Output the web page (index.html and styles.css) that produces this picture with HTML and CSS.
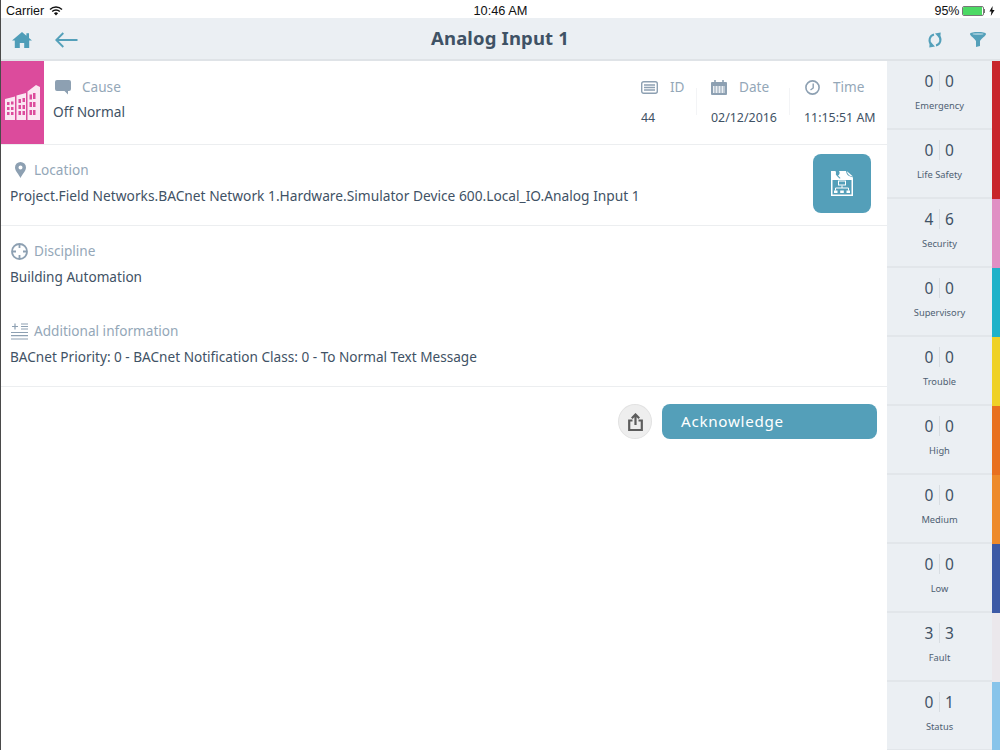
FILE: index.html
```html
<!DOCTYPE html>
<html lang="en">
<head>
<meta charset="utf-8">
<title>Analog Input 1</title>
<link rel="stylesheet" href="styles.css">
</head>
<body>
<div class="app">
  <div class="status">
    <div class="status-left">Carrier
      <svg class="wifi" width="14" height="10" viewBox="0 0 14 10"><path d="M7 9.600 4.900 7.200a3 3 0 0 1 4.200 0z" fill="#111"/><path d="M3.200 5.600a5.400 5.400 0 0 1 7.600 0M1 3.400a8.600 8.600 0 0 1 12 0" fill="none" stroke="#111" stroke-width="1.400"/></svg>
    </div>
    <div class="status-mid">10:46 AM</div>
    <div class="status-right">95%
      <span class="battery"><span class="battery-fill"></span></span><span class="battery-tip"></span>
      <svg width="6" height="10" viewBox="0 0 6 10"><path d="M3.600 0 .4 5.600h2L1.800 10 5.600 4H3.400z" fill="#111"/></svg>
    </div>
  </div>
  <header class="nav">
    <div class="nav-left">
      <svg width="20" height="16" viewBox="0 0 20 16"><path d="M10 0 0 8.500h2.800V16h5v-5h4.400v5h5V8.500H20l-3-2.600V1.200h-2.600V3.700z" fill="#4f9db8"/></svg>
      <svg width="23" height="16" viewBox="0 0 23 16"><path d="M22.500 8H1.500M8.300 1 1.300 8l7 7" fill="none" stroke="#54a0ba" stroke-width="1.900"/></svg>
    </div>
    <h1 class="nav-title">Analog Input 1</h1>
    <div class="nav-right">
      <svg width="16" height="16" viewBox="0 0 16 16"><path d="M7 2.500A5.800 5.800 0 0 0 4.500 12.500M9 13.500A5.800 5.800 0 0 0 11.500 3.500" fill="none" stroke="#54a0ba" stroke-width="2"/><path d="M2.800 9 8 14.500 2.300 15.500zM13.200 7 8 1.500 13.700.5z" fill="#54a0ba"/></svg>
      <svg width="16" height="15" viewBox="0 0 16 15"><path d="M0 2C0-.6 16-.6 16 2c0 1.600-5 5-6 7v5l-4 1V9C5 7 0 3.600 0 2z" fill="#54a0ba"/><ellipse cx="8" cy="2" rx="5.500" ry="1" fill="#9cc8d8"/></svg>
    </div>
  </header>
  <div class="body">
    <main class="content">
      <section class="top">
        <div class="pink">
          <svg width="35" height="35" viewBox="0 0 35 35"><path d="M0 14 10 11.500V35H0zM11.500 10.500 21 8V35H11.500zM22.500 6.500 31 0l4 2V35H22.500z" fill="#fbe6f2"/><path d="M2 17h2.500v3H2zM6 16.500h2.500v3H6zM2 22h2.500v3H2zM6 22h2.500v3H6zM2 27h2.500v3H2zM6 27h2.500v3H6zM13.500 14h2.500v4h-2.500zM17.500 13h2.500v4h-2.500zM13.500 20h2.500v4h-2.500zM17.500 20h2.500v4h-2.500zM13.500 26h2.500v4h-2.500zM17.500 26h2.500v4h-2.500zM24.500 9.500h2.500v5h-2.500zM28 8h2.500v6H28zM24.500 17h2.500v5h-2.500zM28 17h2.500v5H28zM24.500 25h2.500v5h-2.500zM28 25h2.500v5H28z" fill="#dc4b9c"/></svg>
        </div>
        <div class="cause">
          <div class="label label-cause">
            <svg width="16" height="15" viewBox="0 0 16 15"><path d="M2 0h12a2 2 0 0 1 2 2v7a2 2 0 0 1-2 2h-1v3.500L9.500 11H2a2 2 0 0 1-2-2V2a2 2 0 0 1 2-2z" fill="#8da0b2"/></svg>
            <span>Cause</span>
          </div>
          <div class="value">Off Normal</div>
        </div>
        <div class="meta meta-id">
          <div class="label">
            <svg width="17" height="13" viewBox="0 0 17 13"><rect x=".7" y=".7" width="15.600" height="11.600" rx="2" fill="none" stroke="#8da0b2" stroke-width="1.400"/><path d="M3 4h11M3 6.500h11M3 9h11" stroke="#8da0b2" stroke-width="1.400"/></svg>
            <span>ID</span>
          </div>
          <div class="meta-value">44</div>
        </div>
        <div class="meta meta-date has-rule">
          <div class="label">
            <svg width="16" height="15" viewBox="0 0 16 15"><path d="M1 2h14a1 1 0 0 1 1 1v11a1 1 0 0 1-1 1H1a1 1 0 0 1-1-1V3a1 1 0 0 1 1-1z" fill="#8da0b2"/><path d="M4 0v3M12 0v3" stroke="#8da0b2" stroke-width="1.600"/><path d="M2 6h12v7H2z" fill="#ebeff3"/><path d="M4 6v7M7 6v7M10 6v7M13 6v7" stroke="#8da0b2"/></svg>
            <span>Date</span>
          </div>
          <div class="meta-value">02/12/2016</div>
        </div>
        <div class="meta meta-time has-rule">
          <div class="label">
            <svg width="15" height="15" viewBox="0 0 15 15"><circle cx="7.500" cy="7.500" r="6.600" fill="none" stroke="#8da0b2" stroke-width="1.600"/><path d="M8.200 3.500v4.500L5.500 10" fill="none" stroke="#8da0b2" stroke-width="1.400"/></svg>
            <span>Time</span>
          </div>
          <div class="meta-value">11:15:51 AM</div>
        </div>
      </section>
      <section class="location">
        <div class="grow">
          <div class="label label-loc">
            <svg width="11" height="16" viewBox="0 0 11 16"><path d="M5.500 0A5.500 5.500 0 0 1 11 5.500C11 9 7 12.500 5.500 16 4 12.500 0 9 0 5.500A5.500 5.500 0 0 1 5.500 0zm0 3.500a2 2 0 1 0 0 4 2 2 0 0 0 0-4z" fill="#8da0b2" fill-rule="evenodd"/></svg>
            <span>Location</span>
          </div>
          <div class="value">Project.Field Networks.BACnet Network 1.Hardware.Simulator Device 600.Local_IO.Analog Input 1</div>
        </div>
        <div class="tile">
          <svg width="22" height="25" viewBox="0 0 22 25"><path d="M0 0h4.500L5 1.500a3 3 0 0 0 1 3.500l2.500 2.500H9l.5-.5L7 4.500A3 3 0 0 0 8 0h7l.5 2c.5 2 2 3 4 3.500L21 6l1 .5V25H0zM1.500 9v14.500h19V9zM16 .3 22 5.500c-3 0-5.500-2-6-5.200z" fill="#fff" fill-rule="evenodd"/><path d="M7 9.500h8v5H7z" fill="#fff"/><path d="M8 10.500h6v3H8z" fill="#549fb9"/><path d="M11 14.500v2.500M4.500 19.500V17h13v2.500" fill="none" stroke="#fff"/><path d="M3 19.500h3.500v2.500H3zM9.200 19.500h3.600v2.500H9.200zM15.500 19.500H19v2.500h-3.500z" fill="#fff"/></svg>
        </div>
      </section>
      <section class="details">
        <div class="block">
          <div class="label label-disc">
            <svg width="17" height="17" viewBox="0 0 17 17"><circle cx="8.500" cy="8.500" r="7.500" fill="none" stroke="#8da0b2" stroke-width="1.800"/><path d="M8.500 1v4M8.500 12v4M1 8.500h4M12 8.500h4" stroke="#8da0b2" stroke-width="1.800"/></svg>
            <span>Discipline</span>
          </div>
          <div class="value">Building Automation</div>
        </div>
        <div class="block">
          <div class="label label-disc">
            <svg width="17" height="17" viewBox="0 0 17 17"><path d="M1 3.500h6M4 .5v6M10 1h7M10 3.500h7M10 6h7M0 9.500h17M0 12.700h17M0 16h17" fill="none" stroke="#8da0b2" stroke-width="1.200"/></svg>
            <span>Additional information</span>
          </div>
          <div class="value">BACnet Priority: 0 - BACnet Notification Class: 0 - To Normal Text Message</div>
        </div>
      </section>
      <section class="actions">
        <button class="share" type="button" aria-label="Share">
          <svg width="15" height="18" viewBox="0 0 15 18"><path d="M7.500 12V2M3.800 5.200 7.500 1.500l3.700 3.700M4.500 7.500H1.200V17h12.600V7.500h-3.300" fill="none" stroke="#5c5c5c" stroke-width="2.200"/></svg>
        </button>
        <button class="ack" type="button">Acknowledge</button>
      </section>
    </main>
    <aside class="side">
      <div class="cat"><div class="counts"><span>0</span><span>0</span></div><div class="name">Emergency</div><i class="bar c-red"></i></div>
      <div class="cat"><div class="counts"><span>0</span><span>0</span></div><div class="name">Life Safety</div><i class="bar c-red"></i></div>
      <div class="cat"><div class="counts"><span>4</span><span>6</span></div><div class="name">Security</div><i class="bar c-pink"></i></div>
      <div class="cat"><div class="counts"><span>0</span><span>0</span></div><div class="name">Supervisory</div><i class="bar c-cyan"></i></div>
      <div class="cat"><div class="counts"><span>0</span><span>0</span></div><div class="name">Trouble</div><i class="bar c-yellow"></i></div>
      <div class="cat"><div class="counts"><span>0</span><span>0</span></div><div class="name">High</div><i class="bar c-orange"></i></div>
      <div class="cat"><div class="counts"><span>0</span><span>0</span></div><div class="name">Medium</div><i class="bar c-amber"></i></div>
      <div class="cat"><div class="counts"><span>0</span><span>0</span></div><div class="name">Low</div><i class="bar c-blue"></i></div>
      <div class="cat"><div class="counts"><span>3</span><span>3</span></div><div class="name">Fault</div><i class="bar c-none"></i></div>
      <div class="cat"><div class="counts"><span>0</span><span>1</span></div><div class="name">Status</div><i class="bar c-sky"></i></div>
    </aside>
  </div>
</div>
</body>
</html>
```
FILE: styles.css
```css
* { box-sizing: border-box; }
html, body { margin: 0; height: 100%; }
body { font-family: "Noto Sans", "Open Sans", sans-serif; color: #3f5265; background: #fff; overflow: hidden; }
.app { width: 1000px; height: 750px; display: flex; flex-direction: column; border-left: 1px solid #4a4a4a; }
.status { height: 18px; flex: none; display: grid; grid-template-columns: 1fr auto 1fr; align-items: center; padding: 3px 5px 0 5px; font-family: "Liberation Sans", sans-serif; font-size: 12.500px; color: #111; background: #fff; }
.status-left { display: flex; align-items: center; gap: 5px; }
.status-mid { font-size: 12.800px; }
.status-right { display: flex; align-items: center; justify-content: flex-end; }
.battery { width: 22px; height: 10px; margin-left: 2px; border: 1px solid #777; border-radius: 2px; display: block; overflow: hidden; }
.battery-fill { display: block; height: 100%; width: 95%; background: #4cd964; }
.battery-tip { width: 1.500px; height: 4px; background: #777; margin-right: 4px; }
.nav { height: 43px; flex: none; display: flex; align-items: center; justify-content: space-between; padding: 2px 14px 0 11px; background: #ebeff3; border-bottom: 2px solid #dfe3e7; position: relative; }
.nav-left { display: flex; align-items: center; gap: 23px; }
.nav-right { display: flex; align-items: center; gap: 27px; }
.nav-title { position: absolute; left: 0; right: 0; top: 7px; margin: 0; padding-right: 1px; text-align: center; font-size: 18.500px; line-height: 26px; font-weight: 700; color: #3f5265; letter-spacing: .15px; }
.body { flex: 1; display: flex; min-height: 0; }
.content { width: 886px; flex: none; display: flex; flex-direction: column; }
.label { display: flex; align-items: center; font-size: 13.600px; line-height: 18px; color: #94a7b8; }
.value { font-size: 13.700px; line-height: 20px; color: #3f5265; }
.top { height: 84px; display: flex; border-bottom: 1px solid #eceef0; }
.pink { width: 43px; flex: none; background: #dc4b9c; display: flex; align-items: center; justify-content: center; }
.cause { flex: 1; padding: 17px 0 0 9px; }
.label-cause { gap: 11px; height: 18px; margin-bottom: 6px; }
.label-cause svg { margin-left: 2px; }
.meta { flex: none; position: relative; padding-top: 17px; }
.meta .label { gap: 12px; height: 18px; margin-bottom: 13px; }
.meta-time .label { gap: 13px; padding-left: 1px; }
.has-rule::before { content: ""; position: absolute; left: -15px; top: 27px; height: 27px; width: 1px; background: #f3f4f6; }
.meta-value { font-size: 12.400px; line-height: 18px; }
.meta-id { width: 70px; }
.meta-date { width: 93px; }
.meta-time { width: 83px; }
.location { height: 81px; display: flex; padding: 9px 16px 0 9px; border-bottom: 1px solid #eceef0; }
.location .value { font-size: 13.750px; }
.grow { flex: 1; padding-top: 7px; }
.label-loc { gap: 8px; margin-bottom: 7px; margin-left: 5px; }
.tile { width: 58px; height: 59px; border-radius: 8px; background: #549fb9; display: flex; align-items: center; justify-content: center; }
.details { height: 161px; padding: 16px 9px 0; border-bottom: 1px solid #eceef0; display: flex; flex-direction: column; gap: 25px; }
.details .value { font-size: 13.600px; }
.block { height: 55px; }
.label-disc { gap: 6px; margin-bottom: 7px; margin-left: 1px; }
.actions { display: flex; justify-content: flex-end; align-items: center; gap: 10px; padding: 17px 10px 0 0; }
.share { width: 34px; height: 35px; padding: 0; border-radius: 50%; border: 1px solid #e2e2e2; background: #eeeeee; display: flex; align-items: center; justify-content: center; }
.ack { width: 215px; height: 35px; padding: 0 0 0 19px; border: 0; border-radius: 8px; background: #549fb9; color: #fff; font: 400 15.200px/35px "Noto Sans", sans-serif; letter-spacing: .7px; text-align: left; }
.side { flex: 1; display: flex; flex-direction: column; background: #ebeff3; }
.cat { height: 69px; flex: none; position: relative; border-bottom: 2px solid #e2e6ea; padding: 10px 8px 0 0; text-align: center; }
.counts { display: flex; justify-content: center; height: 20px; font-size: 15.500px; line-height: 20px; color: #3f5265; }
.counts span { width: 20px; }
.counts span:first-child { border-right: 1px solid #d8dde2; }
.name { margin-top: 8px; font-size: 9.300px; line-height: 14px; color: #4e6072; }
.bar { position: absolute; right: 0; top: 0; bottom: -2px; width: 8px; }
.c-red { background: #c8252b; }
.c-pink { background: #e08fc4; }
.c-cyan { background: #1eb2c9; }
.c-yellow { background: #efd126; }
.c-orange { background: #e8701f; }
.c-amber { background: #ed8a2a; }
.c-blue { background: #3c5aa6; }
.c-none { background: #ebe8ec; }
.c-sky { background: #88c4ea; }
```
